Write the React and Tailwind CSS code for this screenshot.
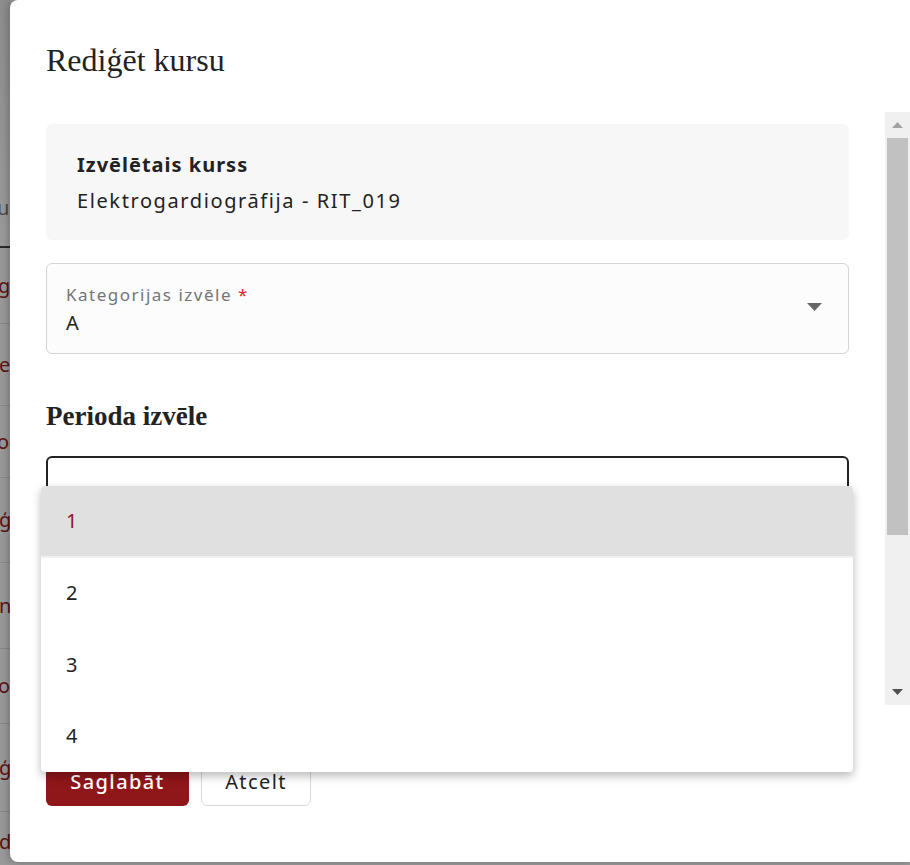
const sans = { fontFamily: '"Noto Sans", "Liberation Sans", sans-serif' }
const serif = { fontFamily: '"Liberation Serif", serif' }

const bgRows = [
  { h: 76, text: 'ga', x: '-ml-[2px]' },
  { h: 82, text: 'er', x: '-ml-[1px]' },
  { h: 72, text: 'og', x: '-ml-[3px]' },
  { h: 85, text: 'ģ', x: '-ml-[1px]' },
  { h: 86, text: 'n', x: '-ml-[1px]' },
  { h: 75, text: 'ol', x: '-ml-[2px]' },
  { h: 88, text: 'ģ', x: '-ml-[1px]' },
  { h: 60, text: 'd', x: '-ml-[1px]' },
]

const BackgroundStrip = () => (
  <div className="w-[10px] shrink-0 overflow-hidden bg-[#9a9a9a] flex flex-col" style={sans}>
    <div className="h-[246px] shrink-0 bg-gradient-to-b from-[#8e8e8e] to-[#9c9c9c] flex flex-col justify-end pb-[28px]">
      <span className="text-[20px] text-[#4a4a4a] -ml-[3px] leading-none">u</span>
    </div>
    <div className="h-[2px] bg-[#2a2a2a] shrink-0" />
    {bgRows.map((row, i) => (
      <div
        key={i}
        className="shrink-0 border-b border-[#888888] flex items-center"
        style={{ height: row.h }}
      >
        <span className={`text-[20px] text-[#5c1214] leading-none ${row.x}`}>{row.text}</span>
      </div>
    ))}
  </div>
)

const Caret = ({ className }) => (
  <svg width="15" height="8" viewBox="0 0 15 8" className={className}>
    <path d="M0 0 L15 0 L7.5 8 Z" fill="currentColor" />
  </svg>
)

const FakeScrollbar = () => (
  <div className="w-[25px] shrink-0 bg-[#f0f0f0] flex flex-col items-center">
    <div className="h-[26px] w-full flex items-center justify-center">
      <svg width="11" height="6" viewBox="0 0 11 6">
        <path d="M5.5 0 L11 6 L0 6 Z" fill="#a3a3a3" />
      </svg>
    </div>
    <div className="h-[397px] w-[21px] bg-[#c1c1c1]" />
    <div className="flex-1" />
    <div className="h-[26px] w-full flex items-center justify-center">
      <svg width="11" height="6" viewBox="0 0 11 6">
        <path d="M0 0 L11 0 L5.5 6 Z" fill="#505050" />
      </svg>
    </div>
  </div>
)

const periods = ['1', '2', '3', '4']
const selected = '1'

export default function App() {
  return (
    <div className="w-[910px] h-[865px] flex bg-[#9a9a9a] overflow-hidden">
      <BackgroundStrip />

      <div className="relative flex-1 h-[862px] bg-white rounded-l-lg shadow-[-2px_0_8px_rgba(0,0,0,0.25)] flex flex-col">
        <h2 className="pl-[36px] pt-[40px] text-[32px] leading-[40px] text-[#222222] mb-[32px]" style={serif}>
          Rediģēt kursu
        </h2>

        <div className="flex h-[593px] shrink-0">
          <div className="flex-1 overflow-hidden pl-[36px] pr-[36px] pt-[12px]" style={sans}>
            <div className="bg-[#f7f7f7] rounded-md pl-[31px] pt-[27px] pb-[25px] flex flex-col gap-[8px] text-[20px] leading-[28px] text-[#222222]">
              <span className="font-bold tracking-[1px]">Izvēlētais kurss</span>
              <span className="tracking-[1.6px]">Elektrogardiogrāfija - RIT_019</span>
            </div>

            <div className="mt-[23px] h-[91px] border border-[#d4d4d4] rounded-md bg-[#fcfcfc] flex items-center pl-[19px] pr-[26px]">
              <div className="flex-1 flex flex-col pt-[2px]">
                <span className="text-[17px] leading-[22px] text-[#757575] tracking-[1.5px]">
                  Kategorijas izvēle <span className="text-[#e11d1d]">*</span>
                </span>
                <span className="text-[20px] leading-[26px] text-[#222222] mt-[4px]">A</span>
              </div>
              <Caret className="text-[#666666] mb-[4px]" />
            </div>

            <h3 className="mt-[46px] text-[27px] leading-[32px] font-bold text-[#222222]" style={serif}>
              Perioda izvēle
            </h3>

            <div className="mt-[24px] h-[91px] border-2 border-[#222222] rounded-md bg-white" />

            <div className="mt-[24px] h-[91px] border border-[#d4d4d4] rounded-md bg-[#fcfcfc]" />
          </div>
          <FakeScrollbar />
        </div>

        <div className="pl-[36px] pt-[53px] flex gap-[12px]" style={sans}>
          <button className="h-[48px] w-[143px] rounded-md bg-[#8f1619] text-white text-[20px] font-medium tracking-[1.4px]">
            Saglabāt
          </button>
          <button className="h-[48px] w-[110px] rounded-md border border-[#d9d9d9] bg-white text-[#222222] text-[20px] tracking-[1.4px]">
            Atcelt
          </button>
        </div>

        <ul
          className="absolute left-[31px] top-[486px] w-[812px] bg-white rounded-[4px] overflow-hidden shadow-[0_4px_10px_rgba(0,0,0,0.28)]"
          style={sans}
        >
          {periods.map((p) => (
            <li
              key={p}
              className={
                p === selected
                  ? 'h-[71.5px] flex items-center pl-[25px] text-[20px] bg-[#e0e0e0] text-[#8f1619] border-b-2 border-[#f0f0f0]'
                  : 'h-[71.5px] flex items-center pl-[25px] text-[20px] text-[#222222]'
              }
            >
              {p}
            </li>
          ))}
        </ul>
      </div>
    </div>
  )
}
